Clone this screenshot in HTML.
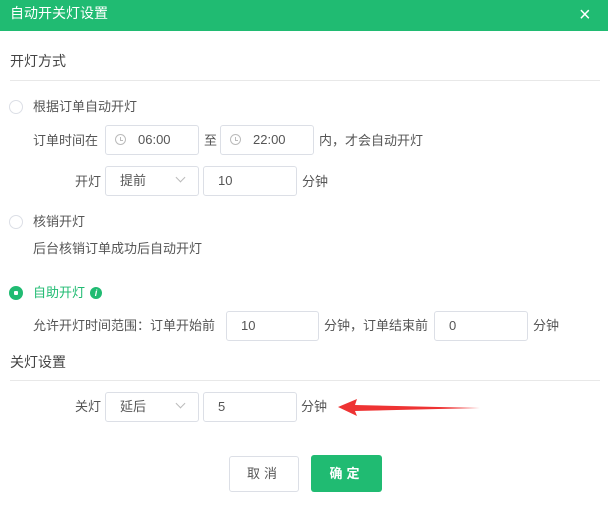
<!DOCTYPE html>
<html><head><meta charset="utf-8"><style>
*{box-sizing:border-box;margin:0;padding:0}
body{width:608px;height:509px;background:#fff;font-family:"Liberation Sans","Noto Sans CJK SC",sans-serif;color:#555;font-size:13px;position:relative;overflow:hidden}
.a{position:absolute;white-space:nowrap}
.hd{position:absolute;left:0;top:0;width:608px;height:31px;background:#20bb72}
.in{position:absolute;height:30px;border:1px solid #dcdfe6;border-radius:3px;background:#fff;font-size:13px;color:#555;line-height:28px;padding-left:14px}
.ln{position:absolute;left:10px;width:590px;height:1px;background:#e8e8e8}
.rd{position:absolute;width:14px;height:14px;border:1px solid #dcdfe6;border-radius:50%;background:#fff}
.t{line-height:16px}
</style></head><body>
<div class="hd"></div>
<div class="a t" style="left:10px;top:5px;color:#fff;font-size:14px">自动开关灯设置</div>
<div class="a" style="left:579px;top:4px;color:#fff;font-size:20px;line-height:22px">×</div>

<div class="a t" style="left:10px;top:53px;font-size:14px;color:#444">开灯方式</div>
<div class="ln" style="top:80px"></div>

<div class="rd" style="left:9px;top:100px"></div>
<div class="a t" style="left:33px;top:99px">根据订单自动开灯</div>
<div class="a t" style="left:33px;top:133px">订单时间在</div>
<div class="in" style="left:105px;top:125px;width:94px;padding-left:32px">06:00</div>
<div class="a" style="left:115px;top:134px;width:11px;height:11px;border:1px solid #bbb;border-radius:50%"></div>
<div class="a" style="left:120px;top:137px;width:3px;height:4px;border-left:1px solid #bbb;border-bottom:1px solid #bbb"></div>
<div class="a t" style="left:204px;top:133px">至</div>
<div class="in" style="left:220px;top:125px;width:94px;padding-left:32px">22:00</div>
<div class="a" style="left:230px;top:134px;width:11px;height:11px;border:1px solid #bbb;border-radius:50%"></div>
<div class="a" style="left:235px;top:137px;width:3px;height:4px;border-left:1px solid #bbb;border-bottom:1px solid #bbb"></div>
<div class="a t" style="left:319px;top:133px">内，才会自动开灯</div>

<div class="a t" style="left:75px;top:174px">开灯</div>
<div class="in" style="left:105px;top:166px;width:94px">提前</div>
<div class="a" style="left:177px;top:174px;width:7px;height:7px;border-right:1px solid #bbb;border-bottom:1px solid #bbb;transform:rotate(45deg)"></div>
<div class="in" style="left:203px;top:166px;width:94px">10</div>
<div class="a t" style="left:302px;top:174px">分钟</div>

<div class="rd" style="left:9px;top:215px"></div>
<div class="a t" style="left:33px;top:214px">核销开灯</div>
<div class="a t" style="left:33px;top:241px">后台核销订单成功后自动开灯</div>

<div class="rd" style="left:9px;top:286px;background:#20bb72;border-color:#20bb72"></div>
<div class="a" style="left:14px;top:291px;width:4px;height:4px;background:#fff;border-radius:1px"></div>
<div class="a t" style="left:33px;top:285px;color:#20bb72">自助开灯</div>
<div class="a" style="left:90px;top:287px;width:12px;height:12px;border-radius:50%;background:#20bb72;color:#fff;font-size:9px;line-height:12px;text-align:center;font-style:italic;font-weight:bold">i</div>

<div class="a t" style="left:33px;top:318px">允许开灯时间范围：订单开始前</div>
<div class="in" style="left:226px;top:311px;width:93px">10</div>
<div class="a t" style="left:324px;top:318px">分钟，订单结束前</div>
<div class="in" style="left:434px;top:311px;width:94px">0</div>
<div class="a t" style="left:533px;top:318px">分钟</div>

<div class="a t" style="left:10px;top:354px;font-size:14px;color:#444">关灯设置</div>
<div class="ln" style="top:380px"></div>

<div class="a t" style="left:75px;top:399px">关灯</div>
<div class="in" style="left:105px;top:392px;width:94px">延后</div>
<div class="a" style="left:177px;top:400px;width:7px;height:7px;border-right:1px solid #bbb;border-bottom:1px solid #bbb;transform:rotate(45deg)"></div>
<div class="in" style="left:203px;top:392px;width:94px">5</div>
<div class="a t" style="left:301px;top:399px">分钟</div>
<svg class="a" style="left:336px;top:398px" width="150" height="20"><polygon points="2,9 21,1 19,7 144,10 19,13 21,18" fill="#ee3333"/></svg>

<div class="a" style="left:229px;top:456px;width:70px;height:36px;border:1px solid #dcdfe6;border-radius:3px;text-align:center;line-height:34px;letter-spacing:4px;color:#555">取消</div>
<div class="a" style="left:311px;top:455px;width:71px;height:37px;background:#20bb72;border-radius:3px;text-align:center;line-height:37px;letter-spacing:4px;color:#fff;font-weight:bold">确定</div>
</body></html>
